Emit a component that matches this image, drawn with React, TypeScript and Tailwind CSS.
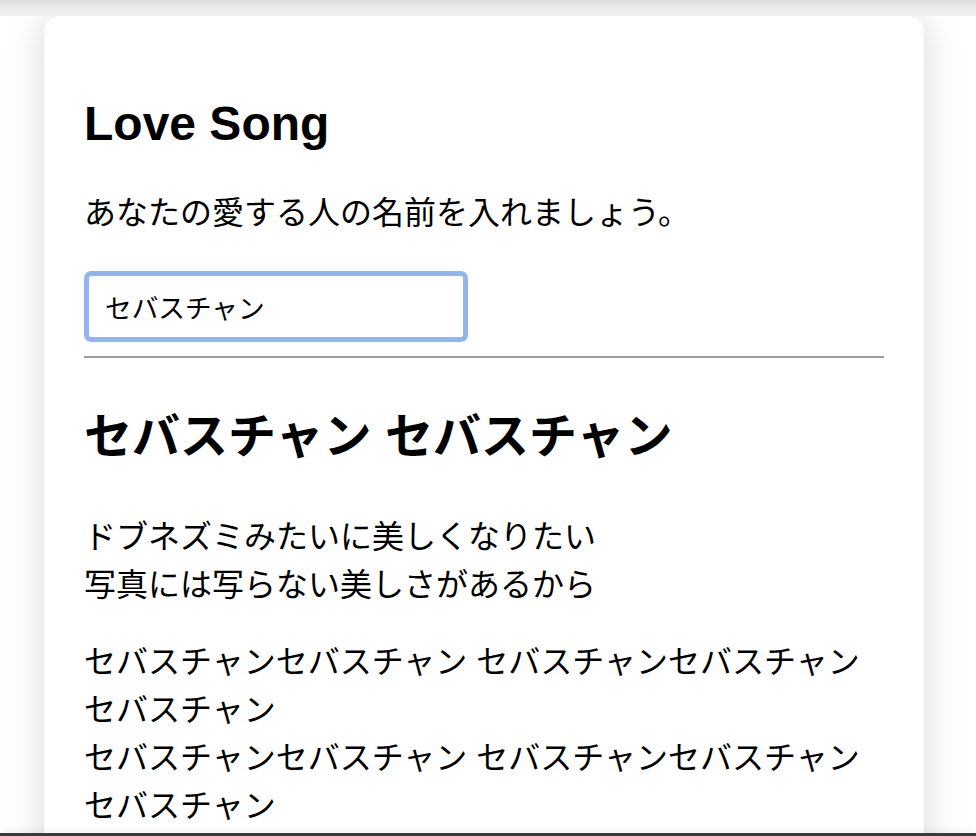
import React, { useState } from "react";

const App: React.FC = () => {
  const [name, setName] = useState("セバスチャン");

  return (
    <div className="min-h-screen bg-white font-['Liberation_Sans','Noto_Sans_CJK_JP',sans-serif] text-black">
      {/* Sombra superior */}
      <div className="fixed top-0 inset-x-0 h-[16px] z-10 bg-gradient-to-b from-[#dcdcdc] via-[#ececec] to-[#f1f1f1]" />

      {/* Tarjeta */}
      <div className="ml-[44px] mt-[16px] w-[880px] rounded-t-[16px] bg-white shadow-[0_0_40px_rgba(0,0,0,0.16)] px-[40px] pt-[79px] pb-[60px]">
        <h1 className="text-[48px] leading-[58px] font-bold">Love Song</h1>

        <p className="mt-[36px] text-[32px] leading-[48px]">
          あなたの愛する人の名前を入れましょう。
        </p>

        <div className="mt-[34px]">
          <input
            type="text"
            value={name}
            onChange={(e) => setName(e.target.value)}
            className="w-[384px] h-[71px] border-[5px] border-[#94b4ef] rounded-[7px] pl-[16px] text-[26.67px] outline-none bg-white"
          />
        </div>

        <hr className="mt-[14px] border-0 border-t-2 border-[#9c9c9c]" />

        <h2 className="mt-[50px] text-[48px] leading-[58px] font-bold">
          {name} {name}
        </h2>

        <p className="mt-[47px] text-[32px] leading-[48px]">
          ドブネズミみたいに美しくなりたい
          <br />
          写真には写らない美しさがあるから
        </p>

        <p className="mt-[29px] text-[32px] leading-[48px]">
          {name}
          {name} {name}
          {name} {name}
          <br />
          {name}
          {name} {name}
          {name} {name}
        </p>
      </div>

      {/* Barra inferior */}
      <div className="fixed bottom-0 inset-x-0 h-[3px] z-10 bg-[#3a3a3a] shadow-[0_-3px_5px_rgba(0,0,0,0.07)]" />
    </div>
  );
};

export default App;
